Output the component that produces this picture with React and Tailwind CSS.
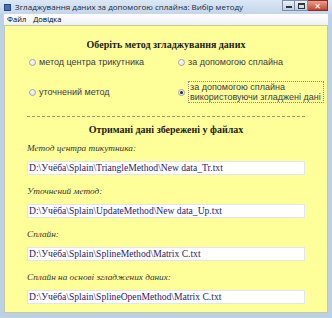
import { useState } from 'react';

const serif = { fontFamily: '"Liberation Serif", "DejaVu Serif", serif' };
const sans = { fontFamily: '"Liberation Sans", "DejaVu Sans", sans-serif' };
const uiSans = { fontFamily: '"Open Sans", "DejaVu Sans", sans-serif' };

const paths = [
  { label: 'Метод центра тикутника:', value: 'D:\\Учёба\\Splain\\TriangleMethod\\New data_Tr.txt' },
  { label: 'Уточнений метод:', value: 'D:\\Учёба\\Splain\\UpdateMethod\\New data_Up.txt' },
  { label: 'Сплайн:', value: 'D:\\Учёба\\Splain\\SplineMethod\\Matrix C.txt' },
  { label: 'Сплайн на основі згладжених даних:', value: 'D:\\Учёба\\Splain\\SplineOpenMethod\\Matrix C.txt' },
];

const Radio = ({ checked, children, onClick, focused }) => (
  <button onClick={onClick} className="flex items-center gap-[3px] text-left text-[9px] leading-[10px] text-[#3a3a4a] whitespace-nowrap" style={sans}>
    <span className="w-[7px] h-[7px] rounded-full border border-[#9aa4b4] bg-gradient-to-br from-white to-[#dfe4ec] flex items-center justify-center shrink-0">
      {checked && <span className="w-[3px] h-[3px] rounded-full bg-[#222]" />}
    </span>
    <span className={focused ? 'border border-dotted border-[#888] pl-[1px] pr-[2px] py-[0px]' : ''}>{children}</span>
  </button>
);

export default function App() {
  const [method, setMethod] = useState(3);

  return (
    <div className="w-[332px] h-[318px] bg-[#bcd0e6] flex flex-col overflow-hidden">
      {/* title bar */}
      <div className="h-[14px] flex items-center bg-gradient-to-b from-[#dbe7f4] to-[#c3d6ea] pl-[4px]">
        <span className="w-[7px] h-[7px] bg-[#4a6fb0] border border-[#28457c] mr-[4px]" />
        <span className="text-[8px] text-[#1d2a3a] whitespace-nowrap" style={uiSans}>
          Згладжування даних за допомогою сплайна: Вибір методу
        </span>
        <div className="ml-auto flex items-start self-start mr-[4px]">
          <span className="w-[13px] h-[11px] border border-[#7d8ea6] bg-gradient-to-b from-[#e9f0f8] to-[#bfcfe2] flex items-end justify-center pb-[2px]">
            <span className="w-[6px] h-[2px] bg-[#333]" />
          </span>
          <span className="w-[13px] h-[11px] border-y border-r border-[#7d8ea6] bg-gradient-to-b from-[#e9f0f8] to-[#bfcfe2] flex items-center justify-center">
            <span className="w-[7px] h-[6px] border border-[#333] border-t-2" />
          </span>
          <span className="w-[20px] h-[11px] border-y border-r border-[#8a2a20] bg-gradient-to-b from-[#e9a090] to-[#c2432e] flex items-center justify-center text-white text-[8px] font-bold leading-none" style={uiSans}>
            ✕
          </span>
        </div>
      </div>

      <div className="flex-1 flex flex-col px-[4px] pb-[5px]">
        {/* menu bar */}
        <div className="h-[11px] flex items-center gap-[7px] bg-gradient-to-b from-white to-[#eef2f7] pl-[3px] text-[7.5px] text-black" style={uiSans}>
          <span>Файл</span>
          <span>Довідка</span>
        </div>

        {/* client area */}
        <div className="flex-1 bg-[#ffff99] border border-[#c8c8a0] flex flex-col px-[22px] pt-[12px]">
          <h2 className="text-center font-bold text-[10px] leading-[14px] text-[#1a1a1a]" style={serif}>
            Оберіть метод згладжування даних
          </h2>

          <div className="grid grid-cols-2 mt-[3px] pl-[2px]">
            <div className="h-[14px] flex items-center">
              <Radio checked={method === 0} onClick={() => setMethod(0)}>метод центра трикутника</Radio>
            </div>
            <div className="h-[14px] flex items-center pl-[11px]">
              <Radio checked={method === 1} onClick={() => setMethod(1)}>за допомогою сплайна</Radio>
            </div>
            <div className="h-[46px] flex items-center">
              <Radio checked={method === 2} onClick={() => setMethod(2)}>уточнений метод</Radio>
            </div>
            <div className="h-[46px] flex items-center pl-[11px]">
              <Radio checked={method === 3} focused onClick={() => setMethod(3)}>
                за допомогою сплайна
                <br />
                використовуючи згладжені дані
              </Radio>
            </div>
          </div>

          <div className="mt-[1px] border-t border-dashed border-[#9a9a70]" />

          <h2 className="text-center font-bold text-[10px] leading-[14px] text-[#1a1a1a] mt-[6px]" style={serif}>
            Отримані дані збережені у файлах
          </h2>

          <div className="flex flex-col mt-[5px] gap-[10px]">
            {paths.map((p) => (
              <div key={p.label} className="flex flex-col gap-[6px]">
                <span className="italic text-[9.25px] leading-[13px] text-[#333]" style={serif}>
                  {p.label}
                </span>
                <div className="h-[14px] bg-white border border-[#dfe6ee] flex items-center px-[1px] text-[9.6px] text-[#2a1a6a] whitespace-nowrap" style={serif}>
                  {p.value}
                </div>
              </div>
            ))}
          </div>
        </div>
      </div>
    </div>
  );
}
